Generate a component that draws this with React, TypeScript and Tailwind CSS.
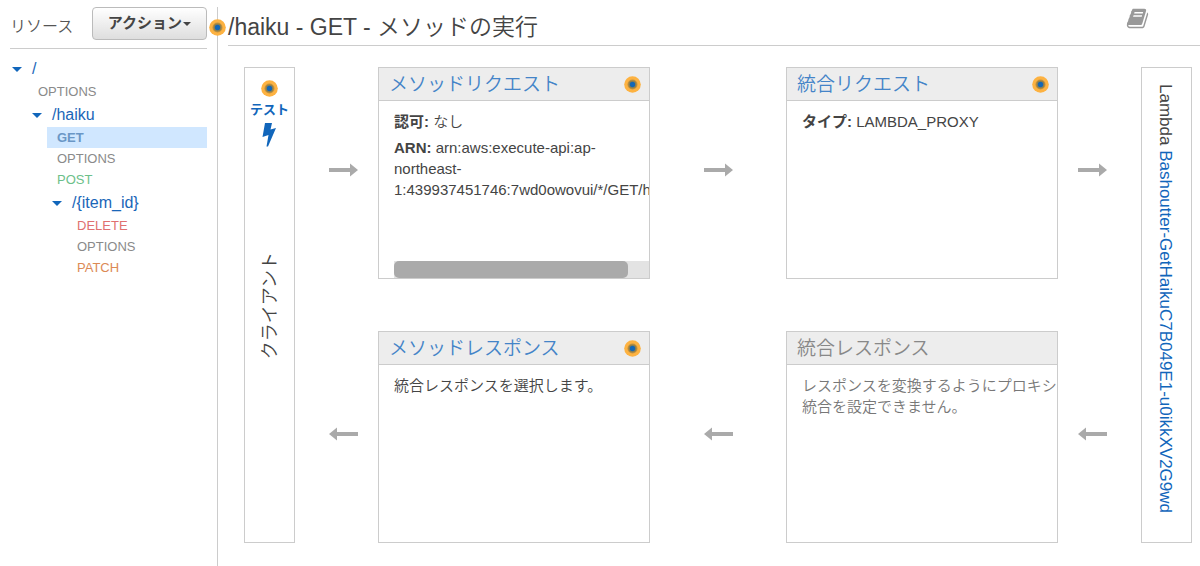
import type { ReactNode } from "react";

interface TreeMethod {
  name: string;
  color: string;
  active?: boolean;
}

const GRAY = "text-[#8a8a8a]";

function Pulse() {
  return (
    <svg className="h-[17px] w-[17px] shrink-0" viewBox="0 0 17 17" aria-hidden="true">
      <circle cx="8.5" cy="8.5" r="8.3" fill="#fdb241" />
      <circle cx="8.5" cy="8.5" r="5" fill="#c4933f" />
      <circle cx="8.5" cy="8.5" r="4" fill="#94804a" />
      <circle cx="8.5" cy="8.5" r="2.7" fill="#1467b6" />
    </svg>
  );
}

function Arrow({ left = false }: { left?: boolean }) {
  return (
    <svg className="h-[14px] w-[29px]" viewBox="0 0 29 14" fill="#aaa" aria-hidden="true">
      {left ? <path d="M29 5v4H8v4.500L0 7 8 .5V5z" /> : <path d="M0 5v4h21v4.500L29 7 21 .5V5z" />}
    </svg>
  );
}

function Resource({ path, indent, methods }: { path: string; indent: string; methods: TreeMethod[] }) {
  return (
    <li className={`pt-px ${indent}`}>
      <a href="#" className="flex h-6 items-center text-base text-[#1a66b8]">
        <svg className="mr-[10px] h-[5px] w-[10px]" viewBox="0 0 10 5" fill="#1166bb" aria-hidden="true">
          <path d="M0 0h10L5 5z" />
        </svg>
        {path}
      </a>
      <ul className="pl-[15px]">
        {methods.map((m) => (
          <li key={m.name}>
            <a
              href="#"
              className={`flex h-[21px] items-center pl-[10px] text-[13px] ${m.color} ${m.active ? "bg-[#d0e7ff] font-bold" : ""}`}
            >
              {m.name}
            </a>
          </li>
        ))}
      </ul>
    </li>
  );
}

function Card({ title, muted = false, children }: { title: string; muted?: boolean; children: ReactNode }) {
  return (
    <section className="flex min-w-0 flex-col border border-[#ccc]">
      <header className="flex h-[33px] shrink-0 items-center justify-between border-b border-[#ccc] bg-[#ededed] pr-2 pl-[10px]">
        <h2 className="text-[19px] leading-none">
          {muted ? <span className="text-[#888]">{title}</span> : <a href="#" className="text-[#4484c8]">{title}</a>}
        </h2>
        {!muted && <Pulse />}
      </header>
      <div className="flex grow flex-col pt-[10px] pl-[15px] text-[15px] leading-[21px]">{children}</div>
    </section>
  );
}

export default function App() {
  return (
    <div className="flex min-h-screen bg-white font-['Liberation_Sans','Noto_Sans_CJK_JP',sans-serif] font-[350] text-[#444]">
      <aside className="mt-[7px] w-[218px] shrink-0 border-r border-[#ccc] pr-[10px] pl-[10px]">
        <div className="flex h-[42px] items-start justify-between border-b border-[#ccc]">
          <h2 className="pt-2 text-base text-[#555]">リソース</h2>
          <button className="flex h-[33px] items-center gap-px rounded border border-[#bbb] bg-linear-to-b from-white to-[#dedede] px-[15px] text-[15px] font-bold">
            アクション
            <svg className="h-1 w-2" viewBox="0 0 8 4" fill="#444" aria-hidden="true">
              <path d="M0 0h8L4 4z" />
            </svg>
          </button>
        </div>
        <ul className="pt-[7px]">
          <Resource path="/" indent="pl-[2px]" methods={[]} />
          <li className={`flex h-[21px] items-center pl-7 text-[13px] ${GRAY}`}>
            <a href="#">OPTIONS</a>
          </li>
          <Resource
            path="/haiku"
            indent="pl-[22px]"
            methods={[
              { name: "GET", color: "text-[#6a97c6]", active: true },
              { name: "OPTIONS", color: GRAY },
              { name: "POST", color: "text-[#6cc08a]" },
            ]}
          />
          <Resource
            path="/{item_id}"
            indent="pl-[42px]"
            methods={[
              { name: "DELETE", color: "text-[#e07070]" },
              { name: "OPTIONS", color: GRAY },
              { name: "PATCH", color: "text-[#dc8a55]" },
            ]}
          />
        </ul>
      </aside>

      <main className="relative min-w-0 grow pl-[10px]">
        <span className="absolute top-[19px] -left-[9px]">
          <Pulse />
        </span>
        <header className="flex h-[46px] items-start justify-between border-b border-[#ccc] pr-[51px]">
          <h1 className="pt-[10px] text-[23px] leading-[34px]">/haiku - GET - メソッドの実行</h1>
          <a href="#" aria-label="ドキュメント" className="pt-[7px]">
            <svg className="h-[23px] w-[23px]" viewBox="0 0 1792 1792" fill="#999" aria-hidden="true">
              <path d="M1703 478q40 57 18 129l-275 906q-19 64-76.500 107.500t-122.500 43.500h-923q-77 0-148.500-53.500t-99.500-131.500q-24-67-2-127 0-4 3-27t4-37q1-8-3-21.500t-3-19.500q2-11 8-21t16.500-23.500 16.500-23.500q23-38 45-91.500t30-91.500q3-10 .5-30t-.5-28q3-11 17-28t17-23q21-36 42-92t25-90q1-9-2.500-32t.5-28q4-13 22-30.500t22-22.500q19-26 42.500-84.500t27.500-96.500q1-8-3-25.500t-2-26.500q2-8 9-18t18-23 17-21q8-12 16.500-30.500t15-35 16-36 19.500-32 26.500-23.500 36-11.500 47.500 5.500l-1 3q38-9 51-9h761q74 0 114 56t18 130l-274 906q-36 119-71.500 153.500t-128.500 34.500h-869q-27 0-38 15-11 16-1 43 24 70 144 70h923q29 0 56-15.500t35-41.500l300-987q7-22 5-57 38 15 59 43zm-1064 2q-4 13 2 22.500t20 9.500h608q13 0 25.500-9.500t16.500-22.500l21-64q4-13-2-22.500t-20-9.500h-608q-13 0-25.500 9.500t-16.500 22.500zm-83 256q-4 13 2 22.500t20 9.500h608q13 0 25.500-9.500t16.500-22.500l21-64q4-13-2-22.500t-20-9.500h-608q-13 0-25.500 9.500t-16.500 22.500z" />
            </svg>
          </a>
        </header>

        <div className="grid grid-cols-[51px_83px_minmax(0,1fr)_136px_minmax(0,1fr)_83px_51px] grid-rows-[minmax(212px,auto)_minmax(212px,auto)] gap-y-[52px] pt-[21px] pr-2 pb-[23px] pl-4">
          {/* Client */}
          <section className="row-span-2 flex flex-col items-center border border-[#ccc] pt-3">
            <Pulse />
            <a href="#" className="flex flex-col items-center pt-[3px] text-[13px] leading-[20px] font-bold text-[#1166bb]">
              テスト
              <svg className="mt-[3px] h-6 w-[14px]" viewBox="0 0 14 24" fill="#1166bb" aria-hidden="true">
                <path d="M3 0h7L8.500 6.500 14 5 6 23.500H4.500L6.500 12 .500 14z" />
              </svg>
            </a>
            <span className="mt-[105px] rotate-180 text-lg leading-6 whitespace-nowrap [text-orientation:sideways] [writing-mode:vertical-rl]">
              クライアント
            </span>
          </section>

          {/* Request row */}
          <div className="flex items-center justify-end pr-5 pb-[6px]">
            <Arrow />
          </div>
          <Card title="メソッドリクエスト">
            <p>
              <b className="font-bold">認可:</b> なし
            </p>
            <p className="overflow-hidden pt-[5px]">
              <b className="font-bold">ARN:</b> arn:aws:execute-api:ap-northeast-1:439937451746:7wd0owovui/*/GET/haiku
            </p>
            <div className="mt-auto bg-[#e3e3e3]">
              <div className="h-[17px] w-11/12 rounded-[5px] bg-[#aaa]" />
            </div>
          </Card>
          <div className="flex items-center justify-center pb-[6px]">
            <Arrow />
          </div>
          <Card title="統合リクエスト">
            <p>
              <b className="font-bold">タイプ:</b> LAMBDA_PROXY
            </p>
          </Card>
          <div className="flex items-center pb-[6px] pl-5">
            <Arrow />
          </div>

          {/* Lambda backend */}
          <section className="row-span-2 flex items-start justify-center border border-[#ccc] pt-4 pr-1">
            <p className="text-[17px] leading-6 whitespace-nowrap [writing-mode:vertical-rl]">
              Lambda{" "}
              <a href="#" className="text-[#1166bb]">
                Bashoutter-GetHaikuC7B049E1-u0ikkXV2G9wd
              </a>
            </p>
          </section>

          {/* Response row */}
          <div className="flex items-center justify-end pr-5 pb-[6px]">
            <Arrow left />
          </div>
          <Card title="メソッドレスポンス">
            <p>統合レスポンスを選択します。</p>
          </Card>
          <div className="flex items-center justify-center pb-[6px]">
            <Arrow left />
          </div>
          <Card title="統合レスポンス" muted>
            <p className="whitespace-nowrap text-[#777]">
              レスポンスを変換するようにプロキシ
              <br />
              統合を設定できません。
            </p>
          </Card>
          <div className="flex items-center pb-[6px] pl-5">
            <Arrow left />
          </div>
        </div>
      </main>
    </div>
  );
}
